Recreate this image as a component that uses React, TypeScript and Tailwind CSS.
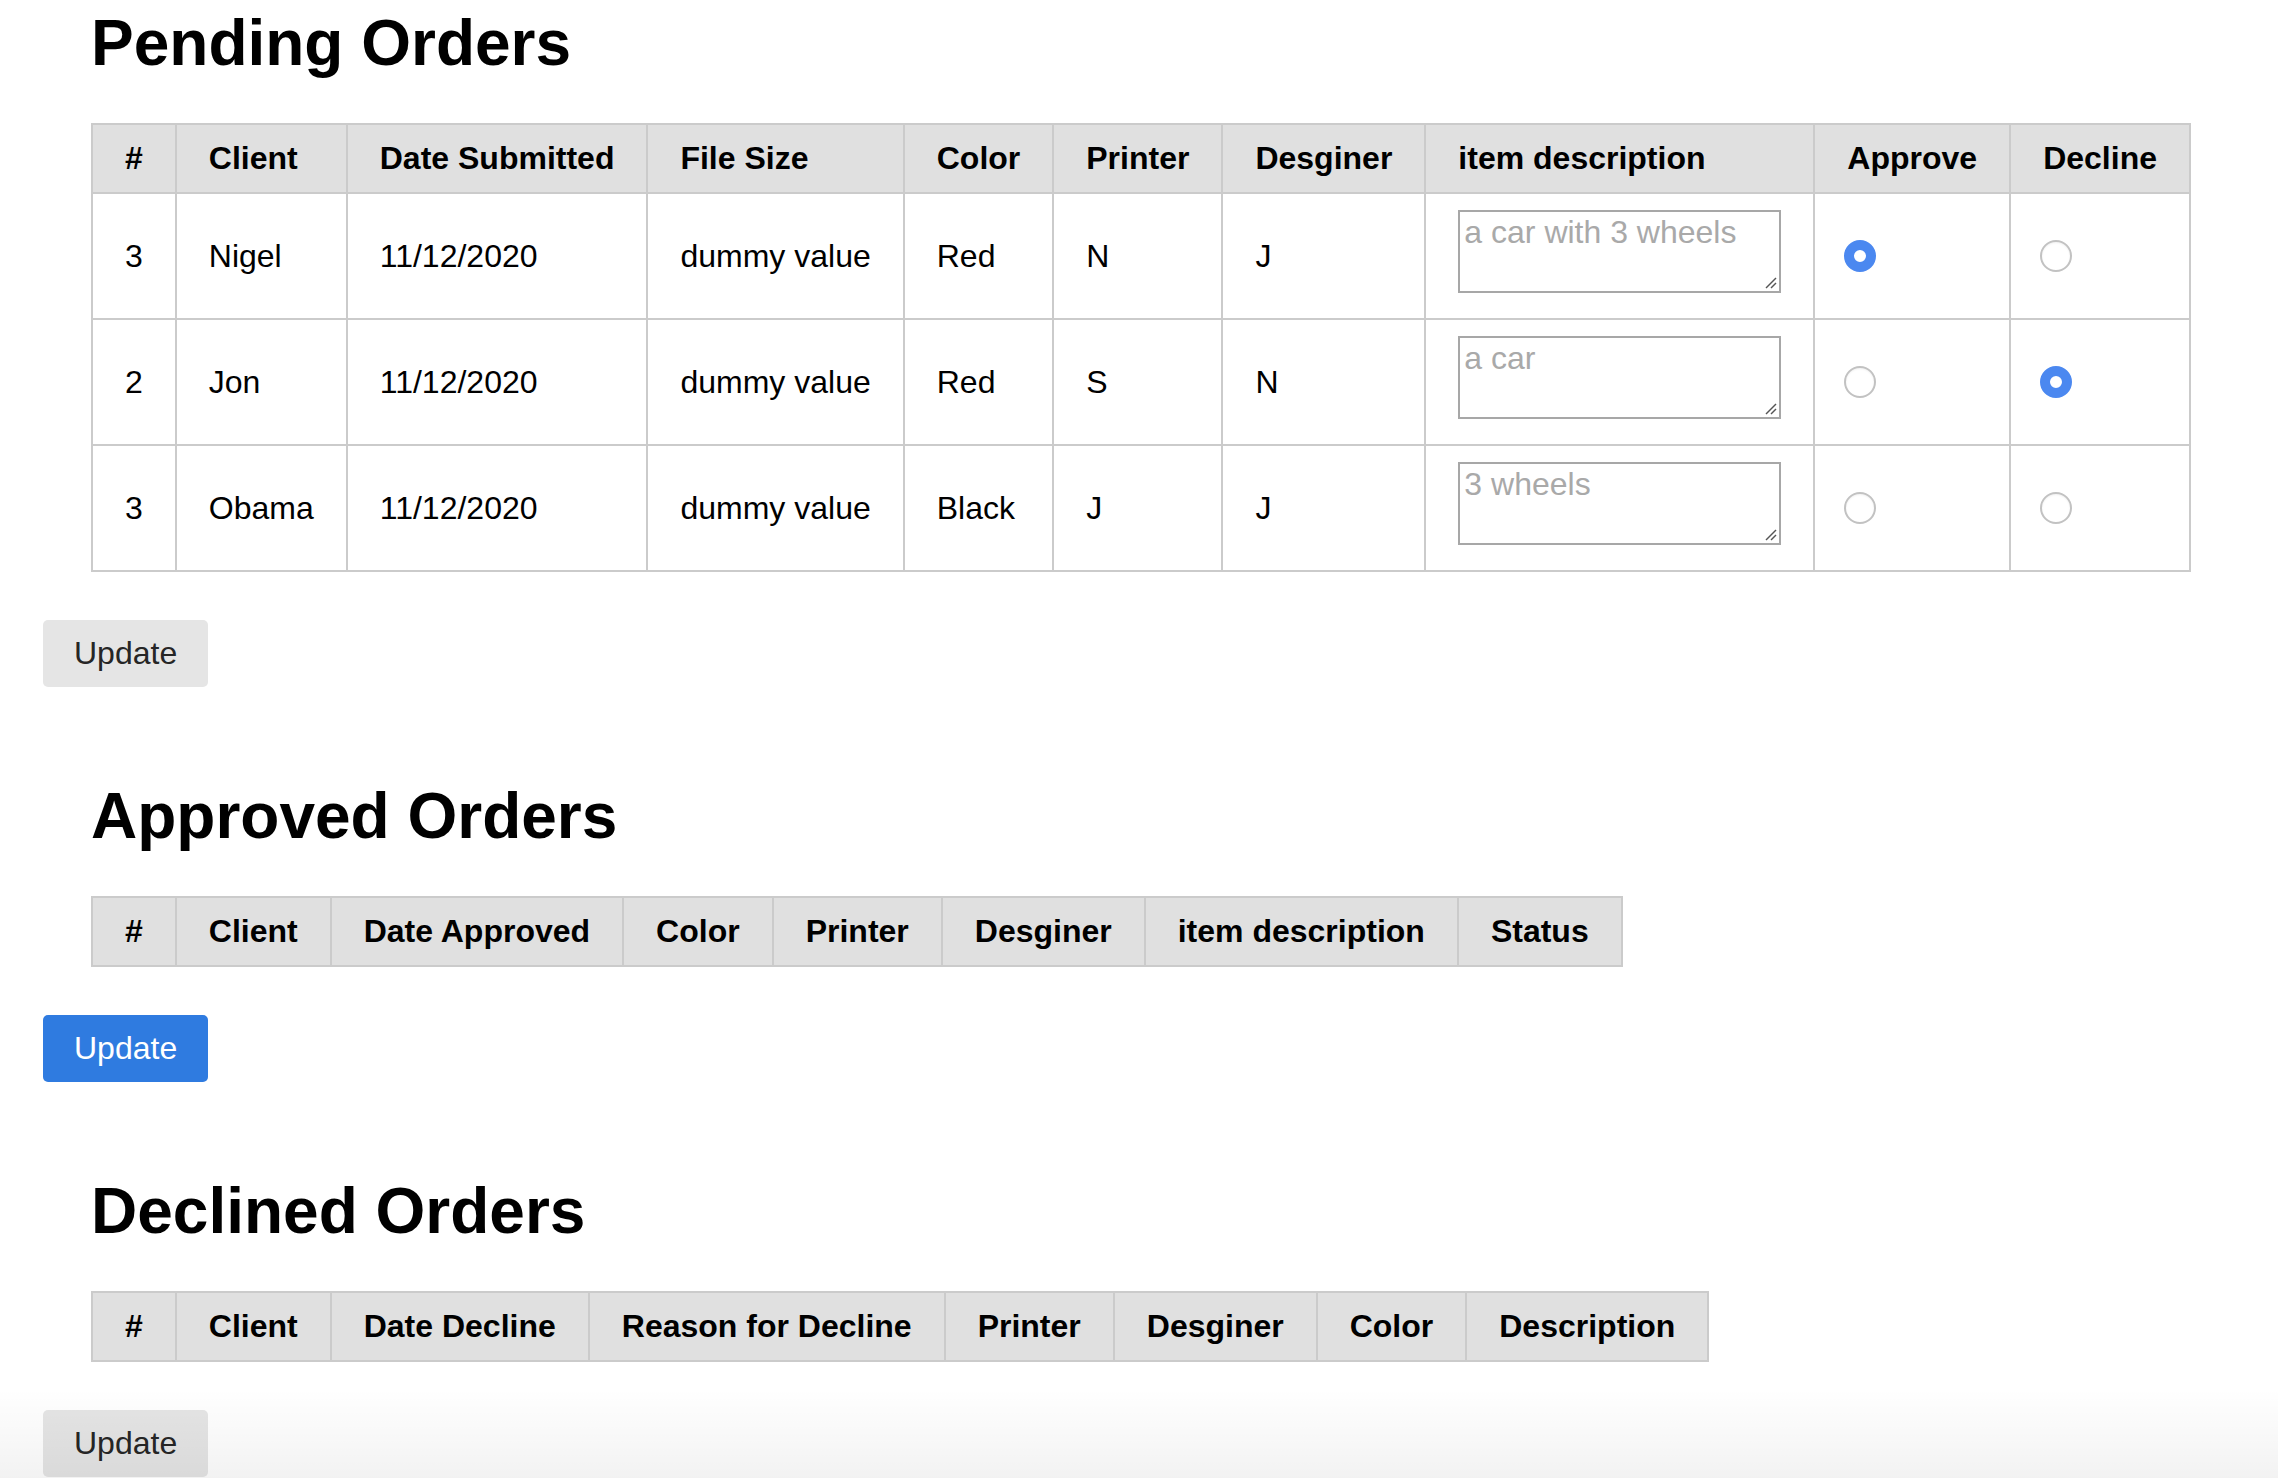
import React from "react";

type Row = {
  id: string;
  client: string;
  date: string;
  size: string;
  color: string;
  printer: string;
  designer: string;
  desc: string;
  choice: "approve" | "decline" | null;
};

const rows: Row[] = [
  { id: "3", client: "Nigel", date: "11/12/2020", size: "dummy value", color: "Red", printer: "N", designer: "J", desc: "a car with 3 wheels", choice: "approve" },
  { id: "2", client: "Jon", date: "11/12/2020", size: "dummy value", color: "Red", printer: "S", designer: "N", desc: "a car", choice: "decline" },
  { id: "3", client: "Obama", date: "11/12/2020", size: "dummy value", color: "Black", printer: "J", designer: "J", desc: "3 wheels", choice: null },
];

function Th({ children }: { children: React.ReactNode }) {
  return (
    <th className="border-2 border-[#cbcbcb] bg-[#e0e0e0] px-[32px] py-[15px] text-left text-[32px] font-bold leading-[37px] text-black whitespace-nowrap">
      {children}
    </th>
  );
}

function Td({ children }: { children: React.ReactNode }) {
  return (
    <td className="border-2 border-[#cbcbcb] px-[32px] py-[16px] text-left align-middle text-[32px] leading-[37px] text-black whitespace-nowrap">
      {children}
    </td>
  );
}

function Radio({ checked, name }: { checked: boolean; name: string }) {
  return (
    <input
      type="radio"
      name={name}
      defaultChecked={checked}
      className="block h-[32px] w-[32px] appearance-none rounded-full border-2 border-[#c2c2c2] bg-white shadow-[inset_0_1px_2px_rgba(0,0,0,0.06)] checked:border-[10.5px] checked:border-[#4b88f0] checked:shadow-none -ml-[3px]"
    />
  );
}

function Heading({ children, first }: { children: React.ReactNode; first?: boolean }) {
  return (
    <h1 className={`${first ? "mt-[6px]" : "mt-[92px]"} ml-[48px] text-[64px] font-bold leading-[74px] text-black`}>
      {children}
    </h1>
  );
}

function UpdateButton({ primary }: { primary?: boolean }) {
  return (
    <button
      type="button"
      className={`mt-[48px] block rounded-[5px] px-[31px] py-[15px] text-[32px] leading-[37px] ${
        primary ? "bg-[#2f7be0] text-white" : "bg-[#e5e5e5] text-[#262626]"
      }`}
    >
      Update
    </button>
  );
}

function HeaderTable({ headers }: { headers: string[] }) {
  return (
    <table className="ml-[48px] mt-[43px] border-collapse">
      <thead>
        <tr>
          {headers.map((h) => (
            <Th key={h}>{h}</Th>
          ))}
        </tr>
      </thead>
    </table>
  );
}

function DescBox({ placeholder }: { placeholder: string }) {
  return (
    <div className="relative mb-[9px] h-[83px] w-[323px]">
      <textarea
        placeholder={placeholder}
        className="block h-[83px] w-[323px] resize-none border-2 border-[#a7a7a7] bg-white px-[4px] py-[2px] text-[32px] leading-[36px] text-black placeholder:text-[#a9a9a9]"
      />
      <svg
        className="pointer-events-none absolute bottom-[4px] right-[4px] h-[12px] w-[12px]"
        viewBox="0 0 12 12"
        aria-hidden="true"
      >
        <line x1="1" y1="11" x2="11" y2="1" stroke="#555" strokeWidth="1.4" />
        <line x1="6" y1="11" x2="11" y2="6" stroke="#555" strokeWidth="1.4" />
      </svg>
    </div>
  );
}

export default function App() {
  return (
    <div className="relative min-h-[1478px] overflow-hidden bg-white pl-[43px] font-['Liberation_Sans',Arial,Helvetica,sans-serif] text-black">
      <Heading first>Pending Orders</Heading>
      <table className="ml-[48px] mt-[43px] border-collapse">
        <thead>
          <tr>
            {["#", "Client", "Date Submitted", "File Size", "Color", "Printer", "Desginer", "item description", "Approve", "Decline"].map((h) => (
              <Th key={h}>{h}</Th>
            ))}
          </tr>
        </thead>
        <tbody>
          {rows.map((r, i) => (
            <tr key={i}>
              <Td>{r.id}</Td>
              <Td>{r.client}</Td>
              <Td>{r.date}</Td>
              <Td>{r.size}</Td>
              <Td>{r.color}</Td>
              <Td>{r.printer}</Td>
              <Td>{r.designer}</Td>
              <Td>
                <DescBox placeholder={r.desc} />
              </Td>
              <Td>
                <Radio name={`row-${i}`} checked={r.choice === "approve"} />
              </Td>
              <Td>
                <Radio name={`row-${i}`} checked={r.choice === "decline"} />
              </Td>
            </tr>
          ))}
        </tbody>
      </table>
      <UpdateButton />

      <Heading>Approved Orders</Heading>
      <HeaderTable headers={["#", "Client", "Date Approved", "Color", "Printer", "Desginer", "item description", "Status"]} />
      <UpdateButton primary />

      <Heading>Declined Orders</Heading>
      <HeaderTable headers={["#", "Client", "Date Decline", "Reason for Decline", "Printer", "Desginer", "Color", "Description"]} />
      <UpdateButton />

      <div className="pointer-events-none absolute bottom-0 left-0 right-0 h-[90px] bg-linear-to-b from-transparent to-black/[0.05]" />
    </div>
  );
}
